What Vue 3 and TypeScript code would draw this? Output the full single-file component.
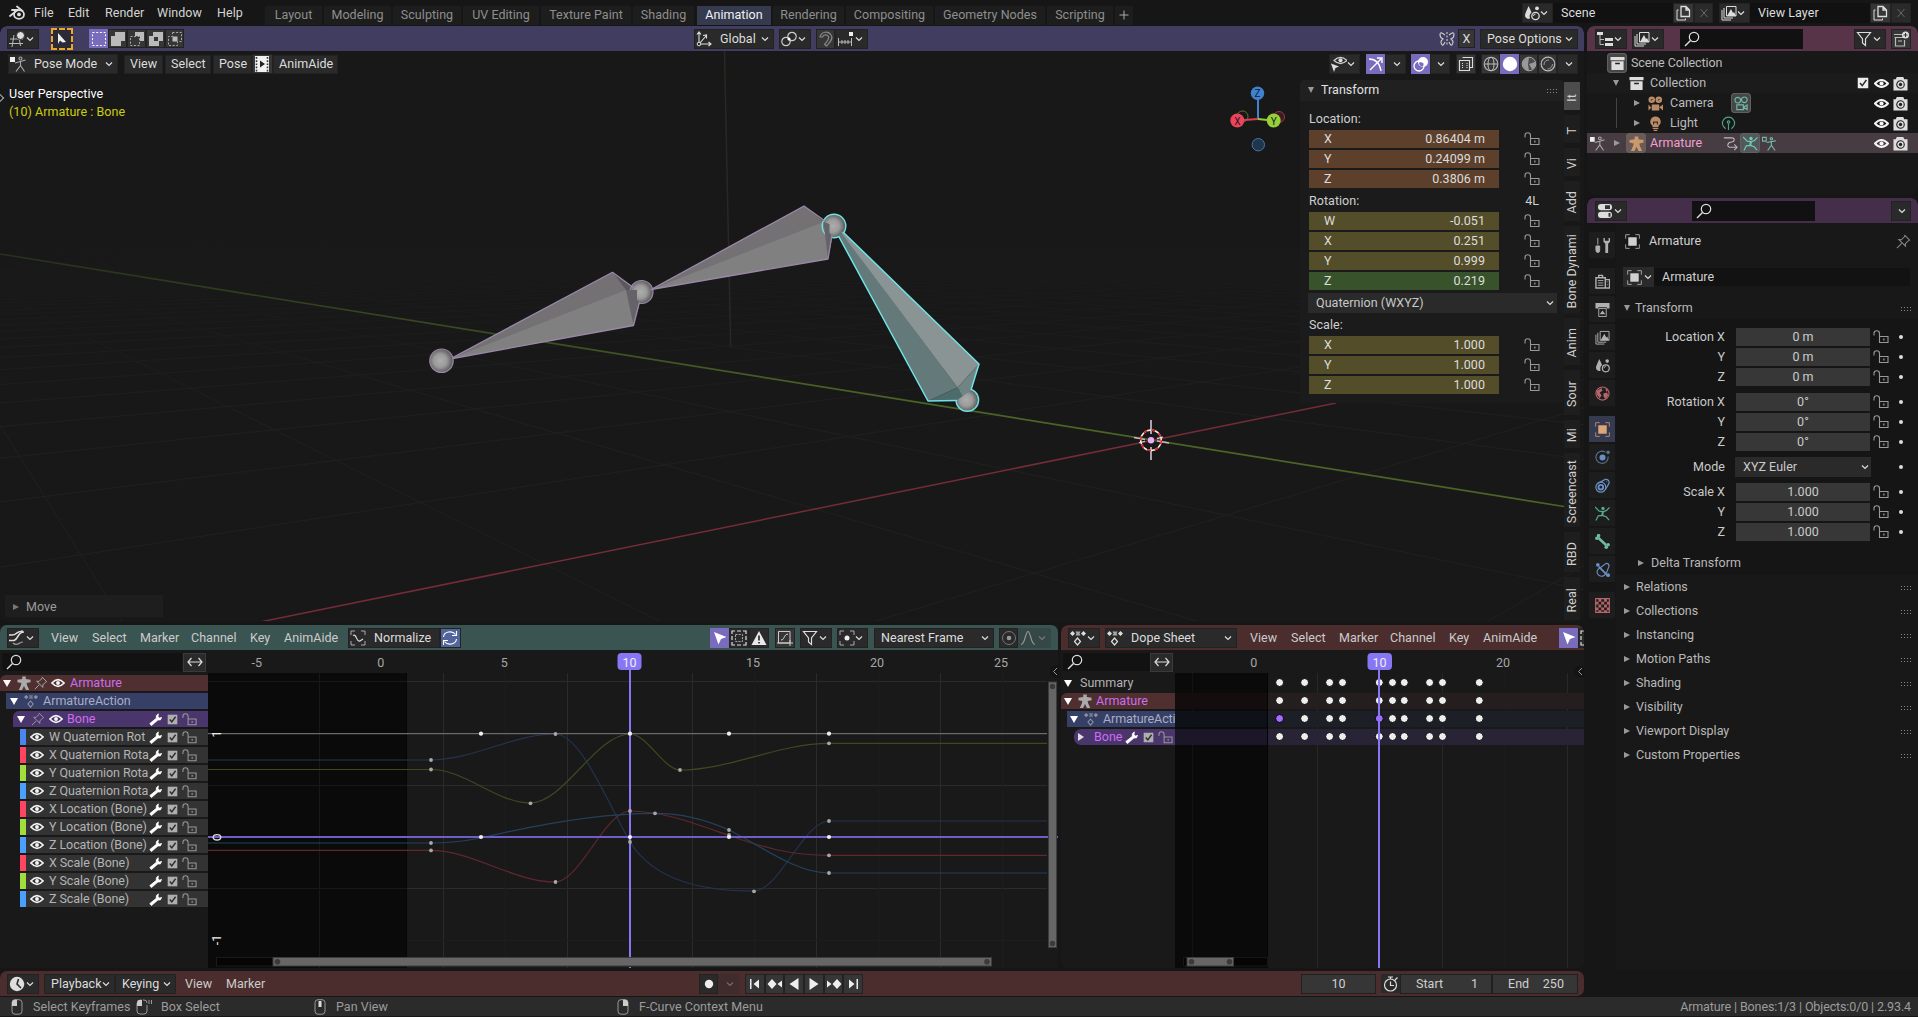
<script setup lang="ts">
import { h } from 'vue'

const Ic = (p: { n: string }) => h('svg', { class: 'ic', viewBox: '0 0 16 16' }, [h('use', { href: '#' + p.n })])
Ic.props = ['n']

interface Item { gap: number; w: number; c: string; ic: string; t: string; car: boolean }
type Raw = [number, number, string, string?, string?, boolean?]

// Turns start/end pairs into flow items: a leading gap and a width.
function bar(start: number, raw: Raw[]): Item[] {
  let end = start
  return raw.map(([a, b, c, ic = '', t = '', car = false]) => {
    const item = { gap: a - end, w: b - a, c, ic, t, car }
    end = b
    return item
  })
}

const topbar = bar(0, [
  [9, 25, 'logo', 'logo'], [34, 68, 'tx', '', 'File'], [68, 105, 'tx', '', 'Edit'], [105, 157, 'tx', '', 'Render'],
  [157, 217, 'tx', '', 'Window'], [217, 260, 'tx', '', 'Help'],
  [265, 322, 'tab', '', 'Layout'], [324, 391, 'tab', '', 'Modeling'], [393, 461, 'tab', '', 'Sculpting'],
  [463, 539, 'tab', '', 'UV Editing'], [541, 631, 'tab', '', 'Texture Paint'], [633, 694, 'tab', '', 'Shading'],
  [697, 771, 'tab on', '', 'Animation'], [773, 844, 'tab', '', 'Rendering'], [846, 933, 'tab', '', 'Compositing'],
  [935, 1045, 'tab', '', 'Geometry Nodes'], [1047, 1113, 'tab', '', 'Scripting'], [1115, 1133, 'tab', 'plus'],
  [1522, 1553, 'btn', 'scene', '', true], [1553, 1673, 'field f2', '', 'Scene'], [1673, 1694, 'btn lt', 'dup'], [1694, 1713, 'btn dim', 'x'],
  [1719, 1750, 'btn', 'layers', '', true], [1750, 1870, 'field f2', '', 'View Layer'], [1870, 1891, 'btn lt', 'dup'], [1891, 1911, 'btn dim', 'x'],
])
const toolbar = bar(0, [
  [7, 39, 'btn', 'view3d', '', true], [51, 73, 'tool', 'cursor'],
  [89, 108, 'btn hi s', 'sel1'], [108, 127, 'btn lt s', 'sel2'], [127, 146, 'btn lt s', 'sel3'], [146, 165, 'btn lt s', 'sel4'], [165, 184, 'btn lt s', 'sel5'],
  [694, 774, 'btn', 'axes', 'Global', true], [779, 811, 'btn', 'pivot', '', true], [816, 835, 'btn lt dim2', 'magnet'], [835, 868, 'btn', 'snap', '', true],
  [1439, 1457, 'plain', 'mirror'], [1458, 1475, 'btn lt s ctr', '', 'X'], [1480, 1578, 'btn', '', 'Pose Options', true],
])
const viewbar = bar(0, [
  [8, 118, 'btn', 'pose', 'Pose Mode', true], [124, 163, 'btn s m', '', 'View'], [165, 211, 'btn s m', '', 'Select'],
  [213, 252, 'btn s m', '', 'Pose'], [252, 273, 'btn lt', 'film'], [273, 338, 'btn s m', '', 'AnimAide'],
  [1329, 1360, 'btn', 'eyecur', '', true], [1366, 1385, 'btn hi', 'gizmo'], [1385, 1406, 'btn', '', '', true],
  [1411, 1430, 'btn hi', 'overlay'], [1430, 1450, 'btn', '', '', true], [1456, 1476, 'btn lt', 'xray'],
  [1481, 1500, 'btn lt', 'wire'], [1500, 1519, 'btn hi', 'solid'], [1519, 1538, 'btn lt', 'mat'], [1538, 1557, 'btn lt', 'rend'], [1557, 1578, 'btn', '', '', true],
])
const graphbar = bar(0, [
  [7, 39, 'btn', 'graph', '', true], [51, 92, 'tx', '', 'View'], [92, 140, 'tx', '', 'Select'], [140, 191, 'tx', '', 'Marker'],
  [191, 250, 'tx', '', 'Channel'], [250, 284, 'tx', '', 'Key'], [284, 342, 'tx', '', 'AnimAide'],
  [348, 440, 'btn', 'norm', 'Normalize'], [440, 461, 'btn blue', 'refresh'],
  [710, 729, 'btn hi', 'cursor2'], [729, 749, 'btn', 'ghost'], [749, 769, 'btn', 'warn'], [775, 795, 'btn lt', 'fit'],
  [800, 832, 'btn', 'filter', '', true], [837, 868, 'btn', 'bound', '', true], [874, 994, 'btn', '', 'Nearest Frame', true],
  [999, 1018, 'btn dim2', 'prop'], [1018, 1051, 'btn mute', 'fall', '', true],
])
const dopebar = bar(1061, [
  [1068, 1100, 'btn', 'action', '', true], [1105, 1237, 'btn', 'action', 'Dope Sheet', true], [1250, 1291, 'tx', '', 'View'],
  [1291, 1339, 'tx', '', 'Select'], [1339, 1390, 'tx', '', 'Marker'], [1390, 1449, 'tx', '', 'Channel'], [1449, 1483, 'tx', '', 'Key'],
  [1483, 1550, 'tx', '', 'AnimAide'], [1559, 1578, 'btn hi', 'cursor2'], [1578, 1598, 'btn', 'ghost'],
])
const timebar = bar(0, [
  [7, 39, 'btn', 'clock', '', true], [44, 115, 'btn', '', 'Playback', true], [115, 176, 'btn', '', 'Keying', true],
  [185, 226, 'tx', '', 'View'], [226, 270, 'tx', '', 'Marker'],
  [699, 718, 'btn', 'rec'], [718, 739, 'btn mute', '', '', true],
  [745, 765, 'btn lt', 'p1'], [765, 784, 'btn lt', 'p2'], [784, 804, 'btn lt', 'p3'], [804, 824, 'btn lt', 'p4'], [824, 843, 'btn lt', 'p5'], [843, 863, 'btn lt', 'p6'],
])
const outbar = bar(1587, [
  [1595, 1627, 'btn', 'outl', '', true], [1632, 1664, 'btn', 'layers', '', true], [1680, 1803, 'field', 'search'],
  [1854, 1886, 'btn', 'filter', '', true], [1891, 1911, 'btn lt', 'newcol'],
])
const propbar = bar(1587, [
  [1595, 1627, 'btn', 'props', '', true], [1692, 1815, 'field', 'search'], [1891, 1911, 'btn', '', '', true],
])
const status = bar(0, [
  [10, 33, 'plain', 'mouseL'], [33, 136, 'tx', '', 'Select Keyframes'], [136, 161, 'plain', 'mouseD'], [161, 312, 'tx', '', 'Box Select'],
  [313, 336, 'plain', 'mouseM'], [336, 615, 'tx', '', 'Pan View'], [616, 639, 'plain', 'mouseR'], [639, 900, 'tx', '', 'F-Curve Context Menu'],
])

const groups = [
  { title: 'Location:', note: '', rows: [['X', '0.86404 m', 'brown'], ['Y', '0.24099 m', 'brown'], ['Z', '0.3806 m', 'brown']] },
  { title: 'Rotation:', note: '4L', rows: [['W', '-0.051', 'olive'], ['X', '0.251', 'olive'], ['Y', '0.999', 'olive'], ['Z', '0.219', 'green']] },
  { title: 'Scale:', note: '', rows: [['X', '1.000', 'olive'], ['Y', '1.000', 'olive'], ['Z', '1.000', 'olive']] },
]
const sideTabs: [string, number][] = [['It', 28], ['T', 28], ['Vi', 28], ['Add', 40], ['Bone Dynami', 87], ['Anim', 47], ['Sour', 45], ['Mi', 28], ['Screencast', 74], ['RBD', 40], ['Real', 43]]

const channels = [
  ['W Quaternion Rot', '#4a86ee'], ['X Quaternion Rota', '#ff4560'], ['Y Quaternion Rota', '#a0de3c'], ['Z Quaternion Rota', '#4aa0ff'],
  ['X Location (Bone)', '#ff4560'], ['Y Location (Bone)', '#a0de3c'], ['Z Location (Bone)', '#4aa0ff'],
  ['X Scale (Bone)', '#ff4560'], ['Y Scale (Bone)', '#a0de3c'], ['Z Scale (Bone)', '#4aa0ff'],
]

// Perspective floor grid: origin plus two vanishing points on the horizon.
const O = [1151, 440], VR = [2156, 235], VG = [-118, 235], A = 0.1255, B = 0.143
function proj(i: number, j: number) {
  const w = 1 + i * A + j * B
  return [(O[0] + i * A * VR[0] + j * B * VG[0]) / w, (O[1] + i * A * VR[1] + j * B * VG[1]) / w]
}
const grid: number[][] = []
for (let k = -12; k <= 40; k++) {
  if (k === 0) continue
  const jMin = (0.25 - 1 - k * A) / B
  const iMin = (0.25 - 1 - k * B) / A
  grid.push([...proj(k, jMin), ...proj(k, jMin + 300)])
  grid.push([...proj(iMin, k), ...proj(iMin + 300, k)])
}

const curves = [
  ['#23344f', 'M208 760H431C472 760 514 734 555 734C580 734 605 797 630 842C655 882 705 891 754 891C779 891 804 821 829 821H1047'],
  ['#3d4a20', 'M208 769.5H431C465 769.5 497 803 530 803C564 803 596 734 630 734C647 734 664 770 680 770C730 770 779 743.3 829 743.3H1047'],
  ['#60272f', 'M208 850.4H431C472 850.4 514 882 555 882C580 882 605 811 630 811C663 811 696 824 729 835.5C762 847 790 855.3 829 855.3H1047'],
  ['#25405c', 'M208 843H431C448 843 465 841 481 838C539 824 597 813.3 655 813.3C680 813.3 705 819 729 830C763 847 796 873 829 873H1047'],
]
const dimKeys = [[431, 760], [555.5, 734], [754, 891.3], [829, 821], [630, 842], [431, 769.5], [530.5, 803.3], [680, 770], [829, 743.3], [431, 850.4], [555.5, 882], [630, 811], [829, 855.3], [431, 843], [655, 813.3], [729, 830], [829, 873], [729, 835]]
const keys = [[481, 733.7], [630, 733.7], [729, 733.7], [829, 733.7], [481, 837], [630, 837], [729, 837], [829, 837]]
const rulerA: [number, string][] = [[256.7, '-5'], [380.7, '0'], [504.4, '5'], [753, '15'], [877, '20'], [1001, '25']]
const dopeX = [1279.6, 1304.6, 1329.6, 1342.5, 1379.3, 1392.5, 1404.3, 1429.6, 1442.5, 1479.3]
const dopeY = [682.5, 700.5, 718.5, 736.5]

const propTabs = ['tools', 'render', 'output', 'layers', 'scene', 'world', 'object', 'phys', 'cons', 'armdata', 'bone', 'bonecons', 'tex']
const propGroups = [
  { rows: [['Location X', '0 m'], ['Y', '0 m'], ['Z', '0 m']] },
  { rows: [['Rotation X', '0°'], ['Y', '0°'], ['Z', '0°']] },
  { rows: [['Scale X', '1.000'], ['Y', '1.000'], ['Z', '1.000']] },
]
const panels = ['Relations', 'Collections', 'Instancing', 'Motion Paths', 'Shading', 'Visibility', 'Viewport Display', 'Custom Properties']
const bars = { topbar, toolbar, viewbar, graphbar, dopebar, timebar, outbar, propbar, status }

const Bar = (p: { items: Item[] }) => h('div', { class: 'bar' }, p.items.map(i =>
  h('div', { class: 'it ' + i.c, style: { width: i.w + 'px', marginLeft: i.gap + 'px' } }, [
    i.ic ? h(Ic, { n: i.ic }) : null,
    i.t ? h('span', i.t) : null,
    i.car ? h('svg', { class: 'car', viewBox: '0 0 8 8' }, [h('path', { d: 'M1 2.5L4 5.5L7 2.5' })]) : null,
  ])))
Bar.props = ['items']
</script>

<template>
  <svg class="defs" width="0" height="0">
    <symbol id="logo" viewBox="0 0 16 16"><g fill="none" stroke="#ddd" stroke-width="1.8" stroke-linecap="round"><ellipse cx="10" cy="9.5" rx="5" ry="4.3" /><path d="M1 11L8.5 5M3 5H9M8 1.5L13.5 6" /></g><circle cx="10" cy="9.4" r="1.9" fill="#ddd" /></symbol>
    <symbol id="plus" viewBox="0 0 16 16"><path d="M8 3.500v9M3.500 8h9" stroke="#aaa" /></symbol>
    <symbol id="x" viewBox="0 0 16 16"><path d="M4.500 4l7 8M11.500 4l-7 8" stroke="currentColor" /></symbol>
    <symbol id="scene" viewBox="0 0 16 16"><path d="M4.500 1C3.500 4 1 8 1 10.500a3.500 3.500 0 0 0 5 3A5.500 5.500 0 0 1 7.500 7.500C6.500 5 5.500 3 4.500 1z" fill="currentColor" /><circle cx="11.500" cy="11" r="3.700" fill="none" stroke="currentColor" stroke-width="1.300" /><path d="M9.500 11a2 2 0 0 1 2-2" fill="none" stroke="currentColor" /><circle cx="13" cy="3.300" r="1.900" fill="currentColor" /></symbol>
    <symbol id="layers" viewBox="0 0 16 16"><path d="M1 5v10h9M3 3v10h9" fill="none" stroke="currentColor" /><path d="M5.500 1.500h9.500v9.500H5.500z" fill="none" stroke="currentColor" /><path d="M6 11l4-7 2 4 1-1 2 4z" fill="currentColor" /></symbol>
    <symbol id="dup" viewBox="0 0 16 16"><path d="M6 1.500h5l3.500 3.500v6.500H6zM11 1.500V5h3.500" fill="none" stroke="#ddd" stroke-width="1.300" /><path d="M3.500 5H2v10h8.500v-1.500" fill="none" stroke="#ddd" /></symbol>
    <symbol id="view3d" viewBox="0 0 16 16"><path d="M1 8h13M0 12.500h14M5 4l-2 12M10.500 9l1 6" stroke="#bbb" fill="none" /><circle cx="11.500" cy="4.500" r="4" fill="#ddd" stroke="#2b2b2b" /></symbol>
    <symbol id="cursor" viewBox="0 0 16 16"><path d="M5 2l8 9-3.500.4L7 9.500 5 13z" fill="#eee" /></symbol>
    <symbol id="cursor2" viewBox="0 0 16 16"><path d="M2 2l12.500 5L9 9l-2.500 5.500z" fill="#fff" /></symbol>
    <symbol id="sel1" viewBox="0 0 16 16"><path d="M1.500 1.500h13v13h-13z" fill="none" stroke="#fff" stroke-dasharray="2 1.700" /></symbol>
    <symbol id="sel2" viewBox="0 0 16 16"><path d="M5 1h10v9h-4v5H1V5h4z" fill="#bbb" /></symbol>
    <symbol id="sel3" viewBox="0 0 16 16"><path d="M6 1h9v9h-4V5H6z" fill="#bbb" /><path d="M1.500 5.500h9v9h-9z" fill="none" stroke="#aaa" stroke-dasharray="2 1.600" /></symbol>
    <symbol id="sel4" viewBox="0 0 16 16"><path d="M5 1h10v9h-4v5H1V5h4zM6 6v4h4V6z" fill="#bbb" fill-rule="evenodd" /></symbol>
    <symbol id="sel5" viewBox="0 0 16 16"><path d="M5.500 1.500h9v9h-4v4h-9v-9h4z" fill="none" stroke="#aaa" stroke-dasharray="2 1.600" /><path d="M5.500 5.500h5v5h-5z" fill="#bbb" /></symbol>
    <symbol id="axes" viewBox="0 0 16 16"><path d="M3 1v12h12M1 3.500L3 1l2 2.500M12.500 11l2.500 2-2.500 2M3 13l7-8M7 4.500l3.500-.5v3.500" fill="none" stroke="#ddd" stroke-width="1.100" /><circle cx="3" cy="13" r="1.800" fill="#2b2b2b" stroke="#ddd" /></symbol>
    <symbol id="pivot" viewBox="0 0 16 16"><g fill="none" stroke="#ccc" stroke-width="1.200"><circle cx="5" cy="10.500" r="4.200" /><circle cx="11" cy="5.500" r="4.200" /></g><circle cx="8" cy="8" r="1.500" fill="#fff" /></symbol>
    <symbol id="magnet" viewBox="0 0 16 16"><path d="M2 6a6 6 0 0 1 11-2c3 4-2 8-4.500 11L6.500 13.500c2-2.500 5-5 4-8a3.300 3.300 0 0 0-6 .5z" fill="none" stroke="currentColor" stroke-width="1.200" /></symbol>
    <symbol id="snap" viewBox="0 0 16 16"><path d="M1.500 7v8M14.500 7v8M1 11h14M5 9v4M8 9v4M11 9v4" stroke="#bbb" /><path d="M12 1h4v4h-4z" fill="#eee" /></symbol>
    <symbol id="mirror" viewBox="0 0 16 16"><g fill="none" stroke="#ccc" stroke-width="1.100"><path d="M8 1v14" stroke-dasharray="2 1.500" /><path d="M6 4Q1 0 1 3.500T4 8Q1 10 2.500 13T6 11M10 4q5-4 5-.5T12 8q3 2 1.500 5T10 11" /></g></symbol>
    <symbol id="pose" viewBox="0 0 16 16"><path d="M0 1h5v5H0z" fill="#eee" /><g stroke="#aaa" stroke-width="1.100" fill="none"><circle cx="10.500" cy="2.500" r="1.500" /><path d="M5 7l5.500-1.500L15.500 4M10.500 5v5M10.500 9.500L6 15.500M10.500 9.500l4 6" /></g></symbol>
    <symbol id="film" viewBox="0 0 16 16"><path d="M1 0h14v16H1z" fill="#f2f2f2" /><path d="M2.500 1v15M13.500 1v15" stroke="#333" stroke-width="1.600" stroke-dasharray="1.700 1.500" /><path d="M6 4.500v7L11 8z" fill="#222" /></symbol>
    <symbol id="eyecur" viewBox="0 0 16 16"><path d="M3 4.500Q9.500-2 16 4.500Q9.500 10.500 3 4.500z" fill="none" stroke="#ccc" stroke-width="1.200" /><circle cx="9.500" cy="4.200" r="2" fill="#ddd" /><path d="M0 7.500l8 3-3.500 1.500L3 16z" fill="#ddd" /></symbol>
    <symbol id="gizmo" viewBox="0 0 16 16"><path d="M1 3q10 0 12 12M2 14L13 3M9 2h5v5" fill="none" stroke="#fff" stroke-width="1.400" /></symbol>
    <symbol id="overlay" viewBox="0 0 16 16"><circle cx="6" cy="10" r="5" fill="none" stroke="#fff" stroke-width="1.300" /><circle cx="10" cy="6" r="5" fill="#fff" /><path d="M6 6.500a4 4 0 0 0 4 4 5 5 0 0 0 .5-3A4 4 0 0 0 6 6.500z" fill="#7a6cbd" /></symbol>
    <symbol id="xray" viewBox="0 0 16 16"><path d="M4.500 1.500h10v10H12M1.500 4.500h10v10h-10z" fill="none" stroke="#ddd" stroke-width="1.100" /><path d="M4.500 7v5M9 7v5" stroke="#ddd" stroke-dasharray="1 1" /></symbol>
    <symbol id="wire" viewBox="0 0 16 16"><g fill="none" stroke="#bbb" stroke-width="1.100"><circle cx="8" cy="8" r="6.800" /><ellipse cx="8" cy="8" rx="3" ry="6.800" /><path d="M1.500 8h13" /></g></symbol>
    <symbol id="solid" viewBox="0 0 16 16"><circle cx="8" cy="8" r="7.200" fill="#fff" /></symbol>
    <symbol id="mat" viewBox="0 0 16 16"><circle cx="8" cy="8" r="6.800" fill="#4a4a4a" stroke="#aaa" /><path d="M8 1.500A6.500 6.500 0 0 0 8 14.500L7 8.500zM8 8l6-2a6.500 6.500 0 0 1-3 7.500z" fill="#999" /></symbol>
    <symbol id="rend" viewBox="0 0 16 16"><circle cx="8" cy="8" r="6.800" fill="none" stroke="#bbb" stroke-width="1.200" /><path d="M4 9a4.500 4.500 0 0 1 5-5M12.500 8a5 5 0 0 1-5 5" fill="none" stroke="#999" /></symbol>
    <symbol id="lock" viewBox="0 0 16 16"><path d="M6.500 7.500h8.500v6h-8.500zM6.500 7.500V4.500a2.600 2.600 0 0 0-5.500 0V6.500" fill="none" stroke="currentColor" stroke-width="1.100" /><path d="M10.200 9.500h1.300v2h-1.300z" fill="currentColor" /></symbol>
    <symbol id="man" viewBox="0 0 16 16"><path d="M6 .5h4v3l5.500.8v2.700L11 8l.5 2.500L14 16h-3.800L8 11.500 5.800 16H2l2.500-5.500L5 8 .5 7V4.300L6 3.500z" fill="currentColor" /></symbol>
    <symbol id="pin" viewBox="0 0 16 16"><path d="M9.500 1.500l5 5-1.500.8-3 3 .2 2.700L3 6l2.700.2 3-3zM6 10l-5 5" fill="none" stroke="currentColor" stroke-width="1.100" /></symbol>
    <symbol id="eye" viewBox="0 0 16 16"><path d="M1 8Q8 .5 15 8Q8 15.500 1 8z" fill="none" stroke="#f4f4f4" stroke-width="2" /><circle cx="8" cy="8" r="2.200" fill="#f4f4f4" /></symbol>
    <symbol id="action" viewBox="0 0 16 16"><path d="M2.500 1L5 3.500 2.500 6 0 3.500zM13.500 1L16 3.500 13.500 6 11 3.500z" fill="currentColor" /><path d="M5.500 1.500h5L9.500 3.500l1 2h-5l1-2z" fill="currentColor" opacity=".7" /><path d="M7.500 8l3 3.500-3 3.500-3-3.500z" fill="none" stroke="currentColor" stroke-width="1.200" /></symbol>
    <symbol id="wrench" viewBox="0 0 16 16"><path d="M11.500 1L9 3.500v3l-8 6.500 2 2.500 8-7h3l1.500-3-2.500.7-2-1.700z" fill="#fff" stroke="#fff" /></symbol>
    <symbol id="check" viewBox="0 0 16 16"><path d="M1 1h14v14H1z" fill="currentColor" /><path d="M4 8l3 3.500L12.500 4" fill="none" stroke="#2a2a2a" stroke-width="2" /></symbol>
    <symbol id="search" viewBox="0 0 16 16"><circle cx="10" cy="6" r="4.700" fill="none" stroke="#ddd" stroke-width="1.200" /><path d="M6.500 9.500L1 15" stroke="#ddd" stroke-width="1.500" /></symbol>
    <symbol id="swap" viewBox="0 0 16 16"><path d="M1 8h14M4.500 4L1 8l3.500 4M11.500 4L15 8l-3.500 4" fill="none" stroke="#ddd" stroke-width="1.200" /></symbol>
    <symbol id="graph" viewBox="0 0 16 16"><path d="M0 5h3c6 0 2-3 11-4" fill="none" stroke="#ddd" stroke-width="1.500" /><path d="M15 2C8 2 10 9 5 10.500H0" fill="none" stroke="#ddd" stroke-width="1.600" /><path d="M4 13c4 4 6-1 10-1" fill="none" stroke="#999" stroke-width="1.200" /></symbol>
    <symbol id="norm" viewBox="0 0 16 16"><path d="M1 5V1h4M11 1h4v4M15 11v4h-4M5 15H1v-4" fill="none" stroke="#aaa" /><path d="M3 5.500c4-2 3 7 7 5.500L13 9" fill="none" stroke="#ddd" stroke-width="1.200" /></symbol>
    <symbol id="refresh" viewBox="0 0 16 16"><path d="M1.500 7a6.500 5.500 0 0 1 12-2.500M14.500 1v4.500H10M14.500 9a6.500 5.500 0 0 1-12 2.500M1.500 15v-4.500H6" fill="none" stroke="#fff" stroke-width="1.100" /></symbol>
    <symbol id="ghost" viewBox="0 0 16 16"><path d="M1 4V1h3M6 1h4M12 1h3v3M15 6v4M15 12v3h-3M10 15H6M4 15H1v-3M1 10V6" fill="none" stroke="#ddd" stroke-width="1.200" /><path d="M4.500 4.500h7v7h-7z" fill="none" stroke="#aaa" stroke-dasharray="2 1.200" /></symbol>
    <symbol id="warn" viewBox="0 0 16 16"><path d="M8 1L15.500 15H.5z" fill="#e8e8e8" /><path d="M8 5.500v5M8 12v1.500" stroke="#222" stroke-width="1.600" /></symbol>
    <symbol id="fit" viewBox="0 0 16 16"><path d="M1.500 1.500h11.500v11.500H1.500zM0 13h16M13 10v6" fill="none" stroke="#ccc" /><path d="M4 10c4 0 2-5 7-6" fill="none" stroke="#ddd" /></symbol>
    <symbol id="filter" viewBox="0 0 16 16"><path d="M1.500 1.500h13L9.500 8v6.500L6.500 12V8z" fill="none" stroke="#ddd" stroke-width="1.200" /></symbol>
    <symbol id="bound" viewBox="0 0 16 16"><path d="M1 5V1h4M11 1h4v4M15 11v4h-4M5 15H1v-4" fill="none" stroke="#aaa" /><circle cx="8" cy="8" r="2.500" fill="#eee" /></symbol>
    <symbol id="prop" viewBox="0 0 16 16"><circle cx="8" cy="8" r="6.500" fill="none" stroke="#777" /><circle cx="8" cy="8" r="2.300" fill="#999" /></symbol>
    <symbol id="fall" viewBox="0 0 16 16"><path d="M1 14.500C5 14.500 5.500 1.500 8 1.500S11 14.500 15 14.500" fill="none" stroke="#999" stroke-width="1.200" /></symbol>
    <symbol id="clock" viewBox="0 0 16 16"><circle cx="8" cy="8" r="7.200" fill="#ddd" /><path d="M9.500 3L8 8l4 4" fill="none" stroke="#2b2b2b" stroke-width="1.600" /><path d="M12.500 4l3 4-3 4z" fill="#ddd" /></symbol>
    <symbol id="rec" viewBox="0 0 16 16"><circle cx="8" cy="8" r="4.200" fill="#eee" /></symbol>
    <symbol id="p1" viewBox="0 0 16 16"><path d="M3 3h1.500v10H3zM12 3.500v9L6.500 8z" fill="#eee" /></symbol>
    <symbol id="p2" viewBox="0 0 16 16"><path d="M5 3l4.500 5L5 13 .5 8zM15 4.500v7L10.500 8z" fill="#eee" /></symbol>
    <symbol id="p3" viewBox="0 0 16 16"><path d="M12.500 2v12L3.500 8z" fill="#eee" /></symbol>
    <symbol id="p4" viewBox="0 0 16 16"><path d="M3.500 2v12l9-6z" fill="#eee" /></symbol>
    <symbol id="p5" viewBox="0 0 16 16"><path d="M11 3l4.500 5-4.500 5L6.500 8zM1 4.500v7L5.500 8z" fill="#eee" /></symbol>
    <symbol id="p6" viewBox="0 0 16 16"><path d="M11.500 3H13v10h-1.500zM4 3.500v9L9.500 8z" fill="#eee" /></symbol>
    <symbol id="outl" viewBox="0 0 16 16"><path d="M0 1h6v3H0zM8 7h8v3H8zM8 12h8v3H8z" fill="#ddd" /><path d="M3 4v9.500h4M3 8.500h4" fill="none" stroke="#bbb" /></symbol>
    <symbol id="newcol" viewBox="0 0 16 16"><path d="M1 3.500h9M1.500 6.500h9M2.500 6.500v8.500h9V9M5 10h4" fill="none" stroke="#bbb" stroke-width="1.200" /><circle cx="12.500" cy="4" r="3.500" fill="#ddd" /><path d="M12.500 2v4M10.500 4h4" stroke="#333" /></symbol>
    <symbol id="coll" viewBox="0 0 16 16"><path d="M.5 1h15v3.500H.5zM1.500 5.500h13V15h-13z" fill="#ddd" /><path d="M5.500 8h5" stroke="#222" stroke-width="1.500" /></symbol>
    <symbol id="camera" viewBox="0 0 16 16"><circle cx="4" cy="4" r="3.500" fill="#b98b66" /><circle cx="11.500" cy="4" r="3.500" fill="#b98b66" /><path d="M4 9h8v6.500H4zM.5 9l3 3.500-3 3zM12 12l4-3v6.500z" fill="#b98b66" /><path d="M3 4.500l2-1M10.500 4.500l2-1" stroke="#1a1a1a" /></symbol>
    <symbol id="camdata" viewBox="0 0 16 16"><g fill="none" stroke="#6fb9a7" stroke-width="1.200"><circle cx="4" cy="4.500" r="3" /><circle cx="11" cy="4" r="3" /><path d="M3 9.500h7v5H3zM10 12l4-2.500v5z" /></g></symbol>
    <symbol id="light" viewBox="0 0 16 16"><path d="M8 .5a5.500 5.500 0 0 1 3.200 10V12H4.800v-1.500A5.500 5.500 0 0 1 8 .5zM5 12.800h6v1H5zM6 14.700h4V16H6z" fill="#b98b66" /><path d="M6 6v3M10 6v3M6 6.500h4" stroke="#1a1a1a" fill="none" /></symbol>
    <symbol id="lightdata" viewBox="0 0 16 16"><g fill="none" stroke="#4f9f88" stroke-width="1.200"><path d="M5 13.500a6.500 6.500 0 1 1 6 0" /><path d="M8 8v7" /><circle cx="8" cy="6.500" r="1.300" /></g></symbol>
    <symbol id="curve" viewBox="0 0 16 16"><path d="M1 2h8c4 0 4 4 0 4.500C4 7 4 12 8 12h7M12 9l3 3-3 3" fill="none" stroke="#bbb" stroke-width="1.100" /></symbol>
    <symbol id="runner" viewBox="0 0 16 16"><path d="M0 1L4.500 5.500L8.500 6L12 5L15.500 1.500M8.500 6L7.500 10M7.500 10L3.500 10.500L1 15.500M7.500 10L12 11.500L15 15" fill="none" stroke="currentColor" stroke-width="1.300" /><path d="M7 6h3L9 10.500H6.500z" fill="currentColor" opacity=".6" /><circle cx="8.500" cy="2.600" r="1.800" fill="currentColor" /></symbol>
    <symbol id="posedata" viewBox="0 0 16 16"><g fill="none" stroke="#6fb9a7" stroke-width="1.200"><path d="M.5 1.500h4v4h-4z" /><circle cx="10" cy="3" r="1.300" /><path d="M5 7l5-1 5-1M10 6v4L6 15.500M10 10l4 5.500" /></g></symbol>
    <symbol id="rcam" viewBox="0 0 16 16"><path d="M4 1h7l1 2.500h3.500v12H.5v-12H3z" fill="#ddd" /><circle cx="8" cy="9" r="4" fill="none" stroke="#222" stroke-width="1.200" /><circle cx="8" cy="9" r="1.800" fill="#222" /></symbol>
    <symbol id="props" viewBox="0 0 16 16"><rect x="1" y="1" width="14" height="6.300" rx="3" fill="#ddd" /><rect x="1" y="8.700" width="14" height="6.300" rx="3" fill="#ddd" /><path d="M8 2.300h5v3.700H8zM11.500 10h2v3.700h-2z" fill="#333" /></symbol>
    <symbol id="object" viewBox="0 0 16 16"><path d="M.7 5V.7H5M11 .7h4.300V5M15.300 11v4.300H11M5 15.300H.7V11" fill="none" stroke="currentColor" opacity=".75" /><path d="M3.500 3.500h9v9h-9z" fill="currentColor" /></symbol>
    <symbol id="tools" viewBox="0 0 16 16"><path d="M3 0v7M1 8.500h4V13a2 2.500 0 0 1-4 0z" stroke="currentColor" fill="currentColor" /><path d="M9 0v4l2 2v10h3V6l2-2V0h-1.500v3h-4V0z" fill="currentColor" /></symbol>
    <symbol id="render" viewBox="0 0 16 16"><path d="M1 4h10v11H1zM11 6h4.500v9H11M4 3.500V1.500h4v2" fill="none" stroke="currentColor" stroke-width="1.500" /><path d="M3 7h6M3 9.500h6M3 12h6M13 8v1M13 11v1" stroke="currentColor" /></symbol>
    <symbol id="output" viewBox="0 0 16 16"><path d="M.5 1h15v6h-3V5.500h-9V7h-3z" fill="currentColor" /><path d="M4 7h8v8.500H4z" fill="none" stroke="currentColor" /><path d="M5 13l3-4 3 4z" fill="currentColor" /></symbol>
    <symbol id="world" viewBox="0 0 16 16"><circle cx="8" cy="8" r="7" fill="none" stroke="#b5656c" stroke-width="1.200" /><path d="M2 5l5-3 1 3-3 2 2 3-2 3-3-4zM9 8l4-1 1 3-3 4-2-3zM11 2l3 3-2 1z" fill="#b5656c" /></symbol>
    <symbol id="phys" viewBox="0 0 16 16"><path d="M11 2.200A6.500 6.500 0 1 0 14 7" fill="none" stroke="#56708f" stroke-width="1.200" /><circle cx="8" cy="8" r="3.200" fill="#6a8fc4" /><circle cx="14" cy="2.500" r="1.900" fill="#56708f" /></symbol>
    <symbol id="cons" viewBox="0 0 16 16"><g fill="none" stroke="#6a8fc4" stroke-width="1.300"><path d="M2.500 6L11 1.500a3.300 3.300 0 0 1 4 4L11 12.500" /><circle cx="6.200" cy="9.800" r="5.300" /><circle cx="6.200" cy="9.800" r="2.500" stroke-width="2" /><path d="M12 4h1" /></g></symbol>
    <symbol id="bone" viewBox="0 0 16 16"><path d="M3.500 4L12 12" stroke="#6fb9a7" stroke-width="2.600" /><circle cx="3.800" cy="1.800" r="1.900" fill="#6fb9a7" /><circle cx="2" cy="4.500" r="1.900" fill="#6fb9a7" /><circle cx="14" cy="11.500" r="1.900" fill="#6fb9a7" /><circle cx="12" cy="14" r="1.900" fill="#6fb9a7" /></symbol>
    <symbol id="bonecons" viewBox="0 0 16 16"><g fill="none" stroke="#6a8fc4"><path d="M4 5L13 14" stroke-width="2" /><path d="M3 8L12 1.500a3 3 0 0 1 3 3L12 12M3 8a4.500 4.500 0 1 0 8 5" stroke-width="1.200" /></g><circle cx="3" cy="3" r="2" fill="#6a8fc4" /><circle cx="14" cy="14" r="2" fill="#6a8fc4" /></symbol>
    <symbol id="tex" viewBox="0 0 16 16"><path d="M.7.7h14.600v14.600H.7z" fill="none" stroke="#b5656c" stroke-width="1.200" /><path d="M3.700 1h3v3h-3zM9.700 1h3v3h-3zM.7 4h3v3h-3zM6.700 4h3v3h-3zM12.700 4h2.500v3h-2.500zM3.700 7h3v3h-3zM9.700 7h3v3h-3zM.7 10h3v3h-3zM6.700 10h3v3h-3zM12.700 10h2.500v3h-2.500zM3.700 13h3v2.500h-3zM9.700 13h3v2.500h-3z" fill="#b5656c" /></symbol>
    <symbol id="watch" viewBox="0 0 16 16"><g fill="none" stroke="#ddd" stroke-width="1.200"><circle cx="7.500" cy="9" r="6" /><path d="M7.500 5.500V9.500H11M5 1h5M7.500 1v2M12 4l2.500-2.500" /></g></symbol>
    <symbol id="mouseL" viewBox="0 0 16 16"><rect x="2" y=".7" width="10" height="14.500" rx="3" fill="none" stroke="#999" /><path d="M2 7V3.500a3 3 0 0 1 3-2.800h2V7z" fill="#ccc" /></symbol>
    <symbol id="mouseD" viewBox="0 0 16 16"><path d="M11 6v6a3 3 0 0 1-3 3H4a3 3 0 0 1-3-3V4M7 1h1a3 3 0 0 1 3 3M13 1v4M15.500 1v4" fill="none" stroke="#999" /><path d="M1 7V3.500A3 3 0 0 1 4 .7h2V7z" fill="#ccc" /></symbol>
    <symbol id="mouseM" viewBox="0 0 16 16"><rect x="2" y=".7" width="10" height="14.500" rx="3" fill="none" stroke="#999" /><path d="M5.500 2h3v6h-3z" fill="#ddd" /></symbol>
    <symbol id="mouseR" viewBox="0 0 16 16"><rect x="2" y=".7" width="10" height="14.500" rx="3" fill="none" stroke="#999" /><path d="M12 7V3.500A3 3 0 0 0 9 .7H7V7z" fill="#ccc" /></symbol>
  </svg>

  <div class="app">
    <Bar class="top" :items="bars.topbar" />
    <div class="main">
      <div class="left">
        <section class="view">
          <Bar class="hdr violet" :items="bars.toolbar" />
          <svg class="scene3d" viewBox="0 51 1584 570">
            <defs>
              <linearGradient id="fade" gradientUnits="userSpaceOnUse" x1="0" y1="238" x2="0" y2="420"><stop offset="0" stop-color="#181818" /><stop offset="1" stop-color="#1f1f1f" /></linearGradient>
              <linearGradient id="gax" gradientUnits="userSpaceOnUse" x1="0" y1="0" x2="900" y2="0"><stop offset="0" stop-color="#26301a" /><stop offset="1" stop-color="#4a6426" /></linearGradient>
              <radialGradient id="ball" cx=".45" cy=".5"><stop offset="0" stop-color="#adadad" /><stop offset=".55" stop-color="#9b9b9b" /><stop offset="1" stop-color="#606060" /></radialGradient>
            </defs>
            <line v-for="(g, k) in grid" :key="k" :x1="g[0]" :y1="g[1]" :x2="g[2]" :y2="g[3]" stroke="url(#fade)" />
            <path d="M724.500 51L730.600 343" stroke="#2c2722" stroke-width="1.500" /><circle cx="730.600" cy="344.500" r="1.300" fill="none" stroke="#2c2722" />
            <path d="M0 254L1564 506.500" stroke="url(#gax)" stroke-width="1.700" />
            <path d="M260 622L1336 403" stroke="#742c38" stroke-width="1.500" />
            <g stroke-linejoin="round">
              <path d="M450 359L612.500 272.300L634 288.500L640 301L633.500 325.500z" fill="#808080" />
              <path d="M450 359L612.500 272.300L626 290z" fill="#747175" /><path d="M612.500 272.300L634 288.500L636 290H626z" fill="#5b585d" />
              <circle cx="641.500" cy="292" r="11.500" fill="url(#ball)" stroke="#9a86a8" stroke-width="1.200" />
              <path d="M626 290H637L637 300L640 302L633.500 325.500z" fill="#656367" />
              <path d="M634 288L612.500 272.300L450 359L633.500 325.500L639.500 302" fill="none" stroke="#9a86a8" stroke-width="1.300" />
              <circle cx="441.500" cy="360.700" r="11.700" fill="url(#ball)" stroke="#9a86a8" stroke-width="1.200" />
              <path d="M651 289.500L804 206L826 222L832.500 236L828 259z" fill="#808080" />
              <path d="M651 289.500L804 206L823.500 222z" fill="#747175" /><path d="M804 206L827 222L829 224L823.500 222z" fill="#5b585d" />
              <circle cx="834" cy="226" r="11.800" fill="url(#ball)" stroke="#6fe3e6" stroke-width="1.400" />
              <path d="M823.500 222L829.500 224V233L832.500 236L828 259z" fill="#656367" />
              <path d="M825 221L804 206L651 289.500L828 259L832 235" fill="none" stroke="#9a86a8" stroke-width="1.300" />
              <path d="M838.500 236L842 233L957.500 387.500L928 401z" fill="#64797a" /><path d="M841 232.500L843 232L979 364L957.500 387.500z" fill="#8b9494" />
              <circle cx="967.300" cy="400" r="11.300" fill="url(#ball)" stroke="#6fe3e6" stroke-width="1.400" />
              <path d="M928 401L957.500 387.500L963 396L957 400z" fill="#4e6b6b" /><path d="M957.500 387.500L979 364L971 390L963 396z" fill="#6f8584" />
              <path d="M957 400.500L928 401L838.500 236M843 232L979 364L971 390" fill="none" stroke="#6fe3e6" stroke-width="1.500" />
            </g>
            <path d="M1134 437.500l11 2M1157 441l12 2M1139 442.700l6-1.300M1157 438.500l6-1.300" stroke="#c9b6c4" stroke-width="1.300" />
            <path d="M1151 420v14M1151 447v13" stroke="#d9cfe6" stroke-width="1.500" />
            <circle cx="1151" cy="440.300" r="10.300" fill="none" stroke="#f0f0f0" stroke-width="1.500" /><circle cx="1151" cy="440.300" r="10.300" fill="none" stroke="#e01a10" stroke-width="1.500" stroke-dasharray="4.040 4.040" />
            <circle cx="1151" cy="440.300" r="3.200" fill="#e7aef2" />
            <g class="gz"><circle cx="1242.500" cy="116.500" r="5.500" fill="none" stroke="#5d7a2b" /><circle cx="1279" cy="117" r="5.500" fill="#3a1c22" stroke="#a03345" />
              <path d="M1258 119V95" stroke="#3f83d0" stroke-width="2" /><path d="M1258 119L1237 120.500" stroke="#d8405a" stroke-width="2" /><path d="M1258 119L1273 120.500" stroke="#93cc36" stroke-width="2" />
              <circle cx="1257.500" cy="93.200" r="6.700" fill="#3f83d0" /><circle cx="1237.300" cy="120.500" r="7" fill="#ee435a" /><circle cx="1273.700" cy="120.500" r="7" fill="#96cf38" /><circle cx="1258.300" cy="144.700" r="6.200" fill="#233649" stroke="#3a75b8" />
              <text x="1257.500" y="97">Z</text><text x="1237.500" y="124.500">X</text><text x="1273.700" y="124.500">Y</text></g>
          </svg>
          <Bar class="vb" :items="bars.viewbar" />
          <div class="vmid">
            <div class="vtext"><i class="chev r"></i><p>User Perspective</p><p class="yel">(10) Armature : Bone</p></div>
            <div class="npanel">
              <div class="nh"><i class="tri d"></i><span>Transform</span><i class="dots"></i></div>
              <div class="nb">
                <div v-for="(g, gi) in groups" :key="gi" class="grp">
                  <div class="gt"><span>{{ g.title }}</span><b>{{ g.note }}</b></div>
                  <div v-for="(r, ri) in g.rows" :key="ri" class="nr"><div class="val" :class="r[2]"><span>{{ r[0] }}</span><span>{{ r[1] }}</span></div><Ic n="lock" class="lk" /></div>
                  <div v-if="gi === 1" class="quat"><span>Quaternion (WXYZ)</span><svg class="car" viewBox="0 0 8 8"><path d="M1 2.500L4 5.500L7 2.500" /></svg></div>
                </div>
              </div>
            </div>
            <div class="stabs"><div v-for="(s, k) in sideTabs" :key="k" class="st" :class="{ on: k === 0 }" :style="{ height: s[1] + 'px' }"><span>{{ s[0] }}</span></div></div>
          </div>
          <div class="move"><i class="tri"></i>Move</div>
        </section>

        <div class="lower">
          <section class="graph">
            <Bar class="hdr teal" :items="bars.graphbar" />
            <div class="split">
              <div class="chan">
                <div class="srow"><div class="sf"><Ic n="search" /></div><div class="sw"><Ic n="swap" /></div></div>
                <div class="ch red"><i class="wt"></i><Ic n="man" class="g1" /><Ic n="pin" class="g2" /><Ic n="eye" /><span class="mag">Armature</span></div>
                <div class="ch navy"><i class="wt"></i><Ic n="action" class="g1" /><span>ArmatureAction</span></div>
                <div class="ch purp"><i class="wt"></i><Ic n="pin" class="g2" /><Ic n="eye" /><span class="mag">Bone</span><div class="end"><Ic n="wrench" class="wr" /><Ic n="check" class="ck" /><Ic n="lock" class="lk" /></div></div>
                <div v-for="(c, k) in channels" :key="k" class="ch crow"><i class="stripe" :style="{ background: c[1] }"></i><Ic n="eye" /><span>{{ c[0] }}</span><div class="end"><Ic n="wrench" class="wr" /><Ic n="check" class="ck" /><Ic n="lock" class="lk" /></div></div>
              </div>
              <svg class="plot" viewBox="208 650 850 318">
                <rect x="208" y="673" width="198.500" height="295" fill="#0a0a0a" /><path d="M406.500 673V968" stroke="#050505" />
                <path d="M443.500 673V968M567.500 673V968M692.500 673V968M816.500 673V968M940.500 673V968M407 681.500H1047M407 785.500H1047M407 888.500H1047" stroke="#2b2b2b" />
                <path d="M319.500 673V968M208 681.500H407M208 785.500H407M208 888.500H407" stroke="#181818" />
                <path d="M505.500 673V968M754.500 673V968M878.500 673V968M1002.500 673V968M407 940.500H1047" stroke="#1d1d1d" />
                <path v-for="(c, k) in curves" :key="k" :d="c[1]" :stroke="c[0]" fill="none" stroke-width="1.200" />
                <path d="M208 733.700H1047" stroke="#6a6a6a" stroke-width="1.200" />
                <path d="M208 837H1058" stroke="#6e5fc8" stroke-width="2.200" />
                <path d="M630 668V957M630 967v1" stroke="#8877f5" stroke-width="2" />
                <circle v-for="(d, k) in dimKeys" :key="k" :cx="d[0]" :cy="d[1]" r="1.900" fill="#a8a8a8" />
                <circle v-for="(d, k) in keys" :key="k" :cx="d[0]" :cy="d[1]" r="2.100" fill="#f0f0f0" />
                <text v-for="(r, k) in rulerA" :key="k" :x="r[0]" y="666.500">{{ r[1] }}</text>
                <rect x="617.500" y="653" width="24" height="17" rx="4" fill="#8877f5" /><text x="629.500" y="666.500" class="w">10</text>
                <text class="w" transform="translate(220.500 734) rotate(-90)" x="0" y="0">1</text>
                <text class="w" transform="translate(220.500 940) rotate(-90)" x="0" y="0">-1</text>
                <ellipse cx="217" cy="837.300" rx="3.800" ry="2.700" fill="none" stroke="#ddd" stroke-width="1.300" />
                <rect x="216.500" y="957.500" width="60" height="8.500" fill="#050505" stroke="#1a1a1a" />
                <rect x="273" y="957.500" width="718.500" height="8.500" fill="#666" stroke="#3c3c3c" /><circle cx="277.500" cy="961.700" r="2.800" fill="#3a3a3a" /><circle cx="987" cy="961.700" r="2.800" fill="#3a3a3a" />
                <rect x="1048.500" y="682" width="8" height="265.500" fill="#666" stroke="#3c3c3c" /><circle cx="1052.500" cy="686.500" r="2.700" fill="#3a3a3a" /><circle cx="1052.500" cy="943.500" r="2.700" fill="#3a3a3a" />
                <circle cx="1056" cy="671.500" r="6" fill="#141414" /><path d="M1057 668l-3.500 3.500 3.500 3.500" fill="none" stroke="#999" />
              </svg>
            </div>
          </section>
          <section class="dope">
            <Bar class="hdr maroon" :items="bars.dopebar" />
            <div class="split">
              <div class="chan dc">
                <div class="srow"><div class="sf"><Ic n="search" /></div><div class="sw"><Ic n="swap" /></div></div>
                <div class="ch sum"><i class="wt"></i><span>Summary</span></div>
                <div class="ch red"><i class="wt"></i><Ic n="man" class="g1" /><span class="mag">Armature</span></div>
                <div class="ch navy"><i class="wt"></i><Ic n="action" class="g1" /><span>ArmatureActi</span></div>
                <div class="ch purp"><i class="wt rt"></i><span class="mag">Bone</span><div class="end"><Ic n="wrench" class="wr" /><Ic n="check" class="ck" /><Ic n="lock" class="lk" /></div></div>
              </div>
              <svg class="plot" viewBox="1175 650 409 318">
                <rect x="1175" y="673" width="92.500" height="295" fill="#0a0a0a" /><path d="M1267.500 673V968" stroke="#040404" />
                <path d="M1192.500 673V968" stroke="#131313" /><path d="M1504.500 650V968" stroke="#1b1b1b" />
                <path d="M1317.500 673V968M1442.500 673V968M1567.500 673V968" stroke="#282828" />
                <rect x="1268" y="693" width="316" height="16" fill="#251e1e" /><rect x="1268" y="711" width="316" height="16" fill="#1d1f26" /><rect x="1268" y="729" width="316" height="16" fill="#282435" />
                <rect x="1175" y="693" width="92" height="16" fill="#130d0d" /><rect x="1175" y="711" width="92" height="16" fill="#0f1118" /><rect x="1175" y="729" width="92" height="16" fill="#1b1729" />
                <g v-for="y in dopeY" :key="y"><circle v-for="x in dopeX" :key="x" :cx="x" :cy="y" r="4" :fill="y === 718.5 && (x === 1279.6 || x === 1379.3) ? '#a56bff' : '#eee'" stroke="#000" /></g>
                <path d="M1379 668V968" stroke="#8877f5" stroke-width="2" />
                <text x="1253.800" y="666.500">0</text><text x="1503" y="666.500">20</text>
                <rect x="1367.500" y="653" width="24.500" height="17" rx="4" fill="#8877f5" /><text x="1379.500" y="666.500" class="w">10</text>
                <rect x="1183.500" y="957.500" width="84" height="8.500" fill="#050505" stroke="#161616" />
                <rect x="1187" y="957.500" width="46.500" height="8.500" fill="#666" stroke="#3c3c3c" /><circle cx="1191.500" cy="961.700" r="2.800" fill="#3a3a3a" /><circle cx="1229.500" cy="961.700" r="2.800" fill="#3a3a3a" />
                <circle cx="1580" cy="671.500" r="6" fill="#141414" /><path d="M1582 668l-3.500 3.500 3.500 3.500" fill="none" stroke="#999" />
              </svg>
            </div>
          </section>
        </div>
        <div class="time"><Bar :items="bars.timebar" />
          <div class="trt"><div class="num">10</div><div class="wat"><Ic n="watch" /></div><div class="num n2"><span>Start</span><span>1</span></div><div class="num n3"><span>End</span><span>250</span></div></div>
        </div>
      </div>

      <div class="right">
        <section class="outliner">
          <Bar class="hdr plum" :items="bars.outbar" />
          <div class="or o0"><i class="box"><Ic n="coll" /></i><span>Scene Collection</span></div>
          <div class="or o1"><i class="tri d"></i><Ic n="coll" /><span>Collection</span><div class="oe"><Ic n="check" class="ck" /><Ic n="eye" /><Ic n="rcam" /></div></div>
          <div class="kids">
            <div class="or o2"><i class="tri"></i><Ic n="camera" /><span>Camera</span><i class="box"><Ic n="camdata" /></i><div class="oe"><Ic n="eye" /><Ic n="rcam" /></div></div>
            <div class="or o2"><i class="tri"></i><Ic n="light" /><span>Light</span><Ic n="lightdata" class="ld" /><div class="oe"><Ic n="eye" /><Ic n="rcam" /></div></div>
          </div>
          <div class="or o3"><Ic n="pose" class="pm" /><i class="tri"></i><i class="box org"><Ic n="man" /></i><span class="pink">Armature</span><Ic n="curve" class="cv" /><i class="box grn"><Ic n="runner" /></i><Ic n="posedata" class="pd" /><div class="oe"><Ic n="eye" /><Ic n="rcam" /></div></div>
        </section>
        <section class="props">
          <Bar class="hdr purple" :items="bars.propbar" />
          <div class="pb">
            <div class="ptabs"><div v-for="(t, k) in propTabs" :key="t" class="pt" :class="[t, { gp: k === 1 || k === 6 || k === 12 }]"><Ic :n="t === 'armdata' ? 'runner' : t" /></div></div>
            <div class="pc">
              <div class="crumb"><Ic n="object" /><span>Armature</span><Ic n="pin" class="pn" /></div>
              <div class="name"><div class="nbn"><Ic n="object" /><svg class="car" viewBox="0 0 8 8"><path d="M1 2.500L4 5.500L7 2.500" /></svg></div><div class="nf">Armature</div></div>
              <div class="ph"><i class="tri d"></i><span>Transform</span><i class="dots"></i></div>
              <div class="tb">
                <template v-for="(g, gi) in propGroups" :key="gi">
                  <div v-if="gi === 2" class="tr mode"><label>Mode</label><div class="mv"><span>XYZ Euler</span><svg class="car" viewBox="0 0 8 8"><path d="M1 2.500L4 5.500L7 2.500" /></svg></div><i class="pt0"></i></div>
                  <div class="tg"><div v-for="(r, ri) in g.rows" :key="ri" class="tr"><label>{{ r[0] }}</label><div class="tv">{{ r[1] }}</div><Ic n="lock" class="lk" /><i class="pt0"></i></div></div>
                </template>
                <div class="delta"><i class="tri"></i>Delta Transform</div>
              </div>
              <div v-for="p in panels" :key="p" class="ph"><i class="tri"></i><span>{{ p }}</span><i class="dots"></i></div>
            </div>
          </div>
        </section>
      </div>
    </div>
    <div class="status"><Bar :items="bars.status" /><span class="sr">Armature | Bones:1/3 | Objects:0/0 | 2.93.4</span></div>
  </div>
</template>

<style>
html, body { background: #161616; overflow: hidden; }
.bar { display: flex; align-items: center; flex: none; }
.bar .it { flex: none; box-sizing: border-box; height: 20px; display: flex; align-items: center; white-space: nowrap; overflow: hidden; color: #ccc; }
.bar .btn { background: #2a2a2a; color: #ddd; box-shadow: inset 0 0 0 1px #222; padding: 0 5px 0 2px; }
.bar .btn .ic + span { margin-left: 8px; }
.bar .btn > span:first-child { margin-left: 5px; }
.bar .btn.m > span:first-child { margin-left: 4px; }
.bar .btn.ctr { padding: 0; justify-content: center; }
.bar .btn.ctr > span { margin: 0; }
.bar .btn.s { height: 19px; }
.bar .btn.lt { background: #363636; }
.bar .btn.hi { background: #7a6cbd; box-shadow: none; }
.bar .btn.blue { background: #52659a; }
.bar .btn.mute { background: transparent; box-shadow: inset 0 0 0 30px rgba(42, 42, 42, .3); }
.bar .btn.mute .car { opacity: .35; }
.bar .btn.dim { color: #666; }
.bar .btn.dim2 { color: #888; }
.bar .field { background: #111; padding-left: 7px; height: 20px; color: #ddd; }
.bar .field.f2 { padding-left: 8px; }
.bar .field .ic { margin-left: -3px; }
.bar .tool { border: 2px dashed #f0a628; background: #2b2b35; height: 22px; }
.bar .tab { background: #1d1d1d; color: #8e8e8e; height: 19px; margin-top: 4px; justify-content: center; }
.bar .tab.on { background: #363a4e; color: #f2f2f2; }
.ic { width: 16px; height: 16px; flex: none; display: block; }
.car { width: 8px; height: 8px; flex: none; margin-left: auto; }
.car path { fill: none; stroke: #ddd; stroke-width: 1.2; }
</style>
<style scoped>
.defs { position: absolute; }
.app { width: 1918px; height: 1017px; background: #161616; font: 12.5px/16px Roboto, "Liberation Sans", sans-serif; letter-spacing: .04px; color: #d0d0d0; display: flex; flex-direction: column; overflow: hidden; }
.app p { margin: 0; }
.app i { font-style: normal; flex: none; }
.top { height: 26px; padding-bottom: 0; box-sizing: border-box; }
.top :deep(.tx) { color: #d4d4d4; padding-bottom: 1px; }
.main { display: flex; height: 970px; justify-content: space-between; }
.left { width: 1584px; height: 970px; display: flex; flex-direction: column; }
.right { width: 331px; display: flex; flex-direction: column; }
.hdr { height: 25px; border-radius: 7px 7px 0 0; overflow: hidden; }
.violet { background: #403d60; }
.teal { background: #3a5452; }
.maroon { background: #4b2d2e; }
.plum { background: #573448; }
.purple { background: #452e4a; }
.view { height: 596px; background: #181818; border-radius: 7px; position: relative; overflow: hidden; flex: none; }
.scene3d { position: absolute; left: 0; top: 25px; width: 1584px; height: 570px; }
.gz text { font: 10px Roboto, sans-serif; fill: #14202a; text-anchor: middle; }
.vb { height: 26px; margin-bottom: 1px; position: relative; }
.vmid { position: relative; display: flex; height: 540px; }
.vtext { width: 1300px; padding: 7px 0 0 9px; box-sizing: border-box; color: #fff; line-height: 18px; position: relative; }
.vtext .yel { color: #cccc10; }
.chev { position: absolute; left: -3px; top: 17px; width: 5px; height: 5px; border: 1px solid #aaa; border-width: 1px 1px 0 0; transform: rotate(45deg); }
.npanel { width: 264px; margin-top: 2px; height: 323px; background: #1b1b1b; border-radius: 4px; overflow: hidden; }
.nh { height: 20px; padding-bottom: 1px !important; background: #202020; display: flex; align-items: center; padding: 0 7px 0 8px; color: #e2e2e2; }
.nh span { margin-left: 7px; flex: 1; }
.tri { width: 0; height: 0; border: 3.5px solid transparent; border-left: 6px solid #999; border-right: 0; }
.tri.d { border: 3.5px solid transparent; border-top: 6px solid #999; border-bottom: 0; }
.dots { width: 11px; height: 5px; background: radial-gradient(circle, #888 .6px, transparent 1px) 0 0 / 3px 3px; }
.nb { padding: 10px 0 0 9px; }
.gt { height: 16px; margin-bottom: 3px; display: flex; }
.gt b { font-weight: 400; margin-left: auto; margin-right: 25px; }
.nr { display: flex; align-items: center; height: 18px; margin-bottom: 2px; }
.val { width: 190px; height: 18px; line-height: 18px; box-sizing: border-box; padding: 0 14px 0 15px; display: flex; justify-content: space-between; color: #dcdcdc; }
.brown { background: #5c402b; } .olive { background: #544d29; } .green { background: #38532b; }
.nr .lk { margin-left: 25px; color: #999; }
.grp + .grp { padding-top: 3px; }
.quat { height: 20px; width: 249px; box-sizing: border-box; margin: 3px 0 1px -1px; background: #2a2a2a; display: flex; align-items: center; padding: 0 3px 0 8px; color: #c8c8c8; }
.stabs { width: 16px; margin-top: 4px; display: flex; flex-direction: column; gap: 5px; }
.st { width: 16px; padding-top: 3px; box-sizing: border-box; background: #1e1e1e; display: flex; align-items: center; justify-content: center; flex: none; }
.st.on { background: #4c4c4c; }
.st span { writing-mode: vertical-rl; transform: rotate(180deg); white-space: nowrap; line-height: 16px; letter-spacing: .1px; }
.move { position: absolute; left: 5px; top: 569px; width: 158px; height: 22px; background: #1e1e1e; display: flex; align-items: center; padding: 1px 0 0 8px; box-sizing: border-box; color: #9b9b9b; }
.move .tri { margin-right: 7px; border-left-color: #777; }
.lower { display: flex; gap: 3px; margin-top: 3px; height: 343px; flex: none; }
.graph { width: 1058px; background: #191919; overflow: hidden; }
.dope { width: 523px; background: #191919; overflow: hidden; border-radius: 7px; }
.split { display: flex; height: 318px; }
.chan { width: 208px; height: 318px; flex: none; overflow: hidden; }
.chan.dc { width: 114px; }
.plot { width: 850px; height: 318px; flex: none; display: block; }
.dc + .plot { width: 409px; }
.plot text { font: 12.5px Roboto, sans-serif; fill: #a6a6a6; text-anchor: middle; }
.plot text.w { fill: #eee; }
.srow { display: flex; align-items: center; padding: 2px 0 3px 2px; height: 20px; }
.sf { width: 180px; height: 18px; background: #121212; display: flex; align-items: center; padding-left: 4px; box-sizing: border-box; }
.sw { width: 23px; height: 19px; background: #2a2a2a; display: flex; align-items: center; justify-content: center; margin-left: 1px; box-shadow: inset 0 0 0 1px #3a3a3a; }
.dc .sf { width: 87px; } .dc .sw { margin-left: 0; }
.ch { height: 16px; margin-bottom: 2px; display: flex; align-items: center; position: relative; color: #b4b4b4; white-space: nowrap; letter-spacing: 0; }
.ch .ic { width: 14px; height: 14px; }
.ch .wt { width: 0; height: 0; border: 4px solid transparent; border-top: 7px solid #fff; border-bottom: 0; }
.ch .wt.rt { border: 4px solid transparent; border-left: 6px solid #ddd; border-right: 0; }
.ch .mag { color: #cf6cf0; }
.red { background: #4f2f30; padding-left: 3px; border-radius: 6px 0 0 0; }
.red .g1 { margin-left: 6px; color: #aaa; } .red .g2 { margin: 0 3px; color: #aaa; } .red span { margin-left: 5px; }
.navy { background: #364066; margin-left: 6px; padding-left: 4px; }
.navy .g1 { margin: 0 5px 0 6px; color: #8d91a3; }
.navy span { color: #a9aec4; }
.purp { background: #4a356c; margin-left: 13px; padding-left: 4px; border-radius: 6px 0 0 0; }
.purp .g2 { margin: 0 4px 0 6px; color: #999; } .purp span { margin-left: 4px; }
.crow { background: #333; margin-left: 20px; }
.crow .stripe { width: 6px; height: 16px; margin-right: 4px; }
.crow > span { margin-left: 5px; width: 99px; letter-spacing: -.08px; }
.end { margin-left: auto; display: flex; align-items: center; padding-right: 11px; }
.ch .wr { width: 13px; height: 13px; margin-right: 5px; }
.ch .ck { width: 11px; height: 11px; margin-right: 4px; color: #aeaeae; }
.ch .lk { width: 15px; height: 15px; color: #999; }
.sum { padding-left: 3px; } .sum span { margin-left: 8px; }
.dc .red .g1 { margin-left: 6px; } .dc .red span { margin-left: 4px; }
.dc .navy { padding-left: 3px; } .dc .navy span { letter-spacing: -.1px; } .dc .purp span { margin-left: 10px; }
.dc .end { padding-right: 2px; } .dc .purp { border-radius: 7px 0 0 7px; }
.time { height: 25px; margin-top: 3px; background: #4b2d2e; border-radius: 7px 7px 7px 0; display: flex; justify-content: space-between; flex: none; }
.time > :first-child { height: 25px; }
.trt { display: flex; align-items: center; padding-right: 6px; }
.num { width: 75px; height: 20px; box-sizing: border-box; background: #363636; box-shadow: inset 0 0 0 1px #202020; text-align: center; line-height: 20px; }
.wat { width: 19px; height: 19px; background: #2a2a2a; margin-left: 5px; display: flex; align-items: center; justify-content: center; }
.n2, .n3 { display: flex; justify-content: space-between; padding: 0 14px 0 16px; }
.n2 { width: 92px; } .n3 { width: 86px; }
.outliner { height: 169px; background: #181818; border-radius: 7px; overflow: hidden; }
.or { height: 20px; display: flex; align-items: center; position: relative; color: #bcbcbc; white-space: nowrap; }
.o0 { margin-top: 2px; padding-left: 20px; }
.o0 span { letter-spacing: -.1px; }
.o1 { padding-left: 26px; background: #1b1b1b; }
.or .ic { width: 15px; height: 15px; }
.box { width: 20px; height: 20px; border-radius: 4px; background: #474747; box-shadow: inset 0 0 0 1px #606060; display: flex; align-items: center; justify-content: center; }
.or span { margin-left: 4px; }
.o1 > .ic { margin-left: 10px; } .o1 > span { margin-left: 6px; }
.kids { margin-left: 29px; background: linear-gradient(#444, #444) 0 5px / 1px 30px no-repeat; }
.o2 { padding-left: 18px; } .o2 > .ic { margin-left: 8px; } .o2 > span { margin-left: 7px; width: 55px; } .o2 .box { margin-left: 6px; } .o2 > .ld { margin-left: -4px; }
.o3 { background: #483c43; padding-left: 3px; }
.o3 > .tri { margin-left: 9px; } .o3 .box { margin-left: 6px; } .org { color: #c99a6c; background: #6b5b58; } .o3 > span { margin-left: 4px; color: #f29fd0; width: 60px; }
.o3 .cv { margin-left: 13px; } .o3 .grn { margin-left: 2px; color: #6fc9b7; background: #54585a; } .o3 .pd { margin-left: 2px; }
.oe { margin-left: auto; display: flex; align-items: center; gap: 4px; padding-right: 10px; }
.oe .ck { width: 12px; height: 12px; margin-right: 1px; color: #eee; }
.props { margin-top: 3px; height: 772px; background: #181818; border-radius: 7px 7px 0 0; overflow: hidden; }
.pb { display: flex; }
.ptabs { width: 29px; padding: 9px 0 0 2px; box-sizing: border-box; display: flex; flex-direction: column; gap: 2px; height: 747px; background: #161616; }
.pt { width: 26px; height: 26px; background: #1d1d1d; display: flex; align-items: center; justify-content: center; color: #b0b0b0; flex: none; }
.pt .ic { width: 15px; height: 15px; }
.pt.gp { margin-top: 8px; }
.pt.object { background: #363a4e; color: #dba679; }
.pt.armdata { color: #5aa893; }
.pc { flex: 1; }
.crumb { display: flex; align-items: center; height: 36px; padding: 0 7px 0 9px; } .crumb .ic { width: 15px; height: 15px; } .crumb span { margin-left: 9px; flex: 1; } .crumb .pn { color: #888; }
.name { display: flex; align-items: center; height: 20px; margin: 8px 8px 10px 7px; }
.nbn { width: 31px; height: 20px; background: #2a2a2a; display: flex; align-items: center; padding: 0 2px 0 4px; box-sizing: border-box; } .nbn .ic { width: 15px; height: 15px; }
.nf { flex: 1; height: 18px; line-height: 18px; background: #121212; padding-left: 8px; }
.ph { height: 24px; display: flex; align-items: center; padding: 0 7px 0 8px; color: #b8b8b8; letter-spacing: 0; }
.ph .tri { margin-right: 6px; } .ph .tri.d { margin-right: 5px; } .ph span { flex: 1; margin-left: 0; }
.name + .ph { height: 22px; }
.tb { background: #151515; padding-top: 9px; height: 247px; margin-bottom: 0; }
.tg { margin-bottom: 7px; }
.tr { height: 18px; margin-bottom: 2px; display: flex; align-items: center; color: #cacaca; }
.tr label { width: 109px; text-align: right; }
.tv { width: 134px; height: 18px; line-height: 18px; margin-left: 11px; background: #373737; text-align: center; }
.tr .lk { margin-left: 3px; color: #999; } .tr .pt0 { width: 4px; height: 4px; border-radius: 2px; background: #ddd; margin-left: 10px; }
.mode { height: 20px; margin: -1px 0 6px; } .mv { width: 136px; height: 20px; box-sizing: border-box; background: #2a2a2a; margin-left: 10px; padding: 0 2px 0 8px; display: flex; align-items: center; } .mode .pt0 { margin-left: 28px; }
.delta { margin: 11px 0 0 22px; height: 22px; display: flex; align-items: center; color: #b8b8b8; } .delta .tri { margin-right: 7px; }
.status { height: 19px; margin-top: 1px; background: #2b2b2b; display: flex; justify-content: space-between; align-items: center; color: #9c9c9c; }
.status :deep(.it) { color: #9c9c9c; }
.sr { margin-right: 7px; letter-spacing: -.12px; }
</style>
